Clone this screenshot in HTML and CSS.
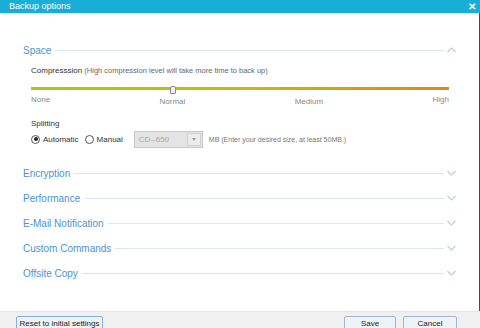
FILE: index.html
```html
<!DOCTYPE html>
<html>
<head>
  <meta charset="UTF-8">
  <title>Backup options</title>
  <link rel="stylesheet" href="styles.css">
</head>
<body>
  <div class="titlebar">
    <span class="title">Backup options</span>
    <span class="close-btn">&#10005;</span>
  </div>

  <div class="main">
    <!-- Space (expanded) -->
    <div class="section">
      <div class="section-header">
        <span class="section-title">Space</span>
        <span class="section-line"></span>
        <svg class="chevron" width="9" height="6" viewBox="0 0 9 6"><path d="M0.5 5 L4.5 1 L8.5 5" fill="none" stroke="#b9cbe6" stroke-width="1.1"/></svg>
      </div>
      <div class="section-body">
        <div class="field-label">Compresssion <span class="hint">(High compression level will take more time to back up)</span></div>
        <div class="slider">
          <div class="slider-track"></div>
          <div class="slider-thumb"></div>
        </div>
        <div class="slider-labels">
          <span class="lvl">None</span>
          <span class="lvl lvl-low">Normal</span>
          <span class="lvl lvl-low">Medium</span>
          <span class="lvl">High</span>
        </div>

        <div class="field-label split-label">Splitting</div>
        <div class="radio-row">
          <label class="radio checked"><span class="radio-dot"></span>Automatic</label>
          <label class="radio"><span class="radio-dot"></span>Manual</label>
          <div class="select">
            <span class="select-value">CD--650</span>
            <span class="select-arrow"></span>
          </div>
          <span class="mb-hint">MB (Enter your desired size, at least 50MB.)</span>
        </div>
      </div>
    </div>

    <div class="section collapsed">
      <div class="section-header">
        <span class="section-title">Encryption</span>
        <span class="section-line"></span>
        <svg class="chevron" width="9" height="6" viewBox="0 0 9 6"><path d="M0.5 1 L4.5 5 L8.5 1" fill="none" stroke="#b9cbe6" stroke-width="1.1"/></svg>
      </div>
    </div>
    <div class="section collapsed">
      <div class="section-header">
        <span class="section-title">Performance</span>
        <span class="section-line"></span>
        <svg class="chevron" width="9" height="6" viewBox="0 0 9 6"><path d="M0.5 1 L4.5 5 L8.5 1" fill="none" stroke="#b9cbe6" stroke-width="1.1"/></svg>
      </div>
    </div>
    <div class="section collapsed">
      <div class="section-header">
        <span class="section-title">E-Mail Notification</span>
        <span class="section-line"></span>
        <svg class="chevron" width="9" height="6" viewBox="0 0 9 6"><path d="M0.5 1 L4.5 5 L8.5 1" fill="none" stroke="#b9cbe6" stroke-width="1.1"/></svg>
      </div>
    </div>
    <div class="section collapsed">
      <div class="section-header">
        <span class="section-title">Custom Commands</span>
        <span class="section-line"></span>
        <svg class="chevron" width="9" height="6" viewBox="0 0 9 6"><path d="M0.5 1 L4.5 5 L8.5 1" fill="none" stroke="#b9cbe6" stroke-width="1.1"/></svg>
      </div>
    </div>
    <div class="section collapsed">
      <div class="section-header">
        <span class="section-title">Offsite Copy</span>
        <span class="section-line"></span>
        <svg class="chevron" width="9" height="6" viewBox="0 0 9 6"><path d="M0.5 1 L4.5 5 L8.5 1" fill="none" stroke="#b9cbe6" stroke-width="1.1"/></svg>
      </div>
    </div>
  </div>

  <div class="footer">
    <button class="btn btn-reset">Reset to initial settings</button>
    <div class="footer-right">
      <button class="btn btn-save">Save</button>
      <button class="btn btn-cancel">Cancel</button>
    </div>
  </div>
</body>
</html>
```

FILE: styles.css
```css
html, body {
  margin: 0;
  padding: 0;
}
body {
  width: 480px;
  height: 328px;
  overflow: hidden;
  font-family: "Liberation Sans", Arial, sans-serif;
  background-color: #ffffff;
  color: #333;
}
.titlebar {
  height: 13px;
  background-color: #19aed6;
  display: flex;
  justify-content: space-between;
  align-items: center;
  padding: 0 4px 0 9px;
}
.title {
  color: #ffffff;
  font-size: 9px;
  line-height: 13px;
}
.close-btn {
  color: #ffffff;
  font-size: 10px;
  font-weight: bold;
  line-height: 13px;
}
.main {
  height: 268px;
  padding: 30px 0 0 23px;
  border-right: 1px solid #4a4a4a;
}
.section-header {
  display: flex;
  align-items: center;
  height: 14px;
  width: 429px;
}
.collapsed {
  margin-bottom: 11px;
}
.section-title {
  font-size: 10px;
  color: #4b93d0;
  white-space: nowrap;
  padding-right: 4px;
}
.section-line {
  flex-grow: 1;
  height: 1px;
  background-color: #dde4f1;
}
.chevron {
  margin-left: 3px;
  margin-right: -4px;
}
.section-body {
  padding: 8px 0 0 8px;
  height: 101px;
}
.field-label {
  font-size: 8px;
  color: #333;
  height: 12px;
  line-height: 12px;
}
.hint {
  color: #666;
  font-size: 7.5px;
}
.slider {
  position: relative;
  margin-top: 10px;
  width: 418px;
  height: 8px;
}
.slider-track {
  margin-top: 2px;
  height: 3px;
  background: linear-gradient(to right, #9ccf12, #c6bb05 50%, #e8860c);
}
.slider-thumb {
  position: absolute;
  left: 139px;
  top: -1px;
  width: 4px;
  height: 6px;
  background-color: #f4f4f4;
  border: 1px solid #8a8a8a;
  border-radius: 2px 2px 1px 1px;
}
.slider-labels {
  display: flex;
  justify-content: space-between;
  width: 418px;
  height: 14px;
  font-size: 8px;
  color: #888;
}
.lvl {
  line-height: 10px;
}
.lvl-low {
  padding-top: 2px;
}
.split-label {
  margin-top: 9px;
}
.radio-row {
  display: flex;
  align-items: center;
  height: 18px;
  font-size: 8px;
}
.radio {
  display: flex;
  align-items: center;
  gap: 3px;
  margin-right: 6px;
  color: #333;
}
.radio-dot {
  display: inline-block;
  box-sizing: border-box;
  width: 9px;
  height: 9px;
  border: 1px solid #555;
  border-radius: 50%;
  background-color: #fff;
  position: relative;
}
.radio.checked .radio-dot::after {
  content: "";
  position: absolute;
  left: 1.5px;
  top: 1.5px;
  width: 4px;
  height: 4px;
  border-radius: 50%;
  background-color: #222;
}
.select {
  display: flex;
  align-items: center;
  justify-content: space-between;
  box-sizing: border-box;
  width: 69px;
  height: 17px;
  margin-left: 5px;
  padding-left: 4px;
  background-color: #e4e4e4;
  border: 1px solid #c9c9c9;
  color: #a8a8a8;
}
.select-arrow {
  box-sizing: border-box;
  width: 14px;
  height: 13px;
  margin-right: 1px;
  border: 1px solid #cfcfcf;
  background-color: #ececec;
  position: relative;
}
.select-arrow::after {
  content: "";
  position: absolute;
  left: 4px;
  top: 4px;
  border-left: 2.5px solid transparent;
  border-right: 2.5px solid transparent;
  border-top: 3px solid #999;
}
.mb-hint {
  margin-left: 6px;
  font-size: 7px;
  color: #777;
}
.footer {
  height: 17px;
  background-color: #f0f0f0;
  border-top: 1px solid #e4e4e4;
  display: flex;
  justify-content: space-between;
  padding: 4px 23px 0 16px;
}
.footer-right {
  display: flex;
  gap: 7px;
}
.btn {
  box-sizing: border-box;
  height: 18px;
  font-family: "Liberation Sans", Arial, sans-serif;
  font-size: 8px;
  color: #222;
  background-color: #eef3f8;
  border: 1px solid #9fb7cf;
  border-radius: 2px;
  padding: 0 2px 4px;
  white-space: nowrap;
}
.btn-reset {
  width: 87px;
  border-color: #86aedb;
}
.btn-save {
  width: 52px;
}
.btn-cancel {
  width: 54px;
}
```
